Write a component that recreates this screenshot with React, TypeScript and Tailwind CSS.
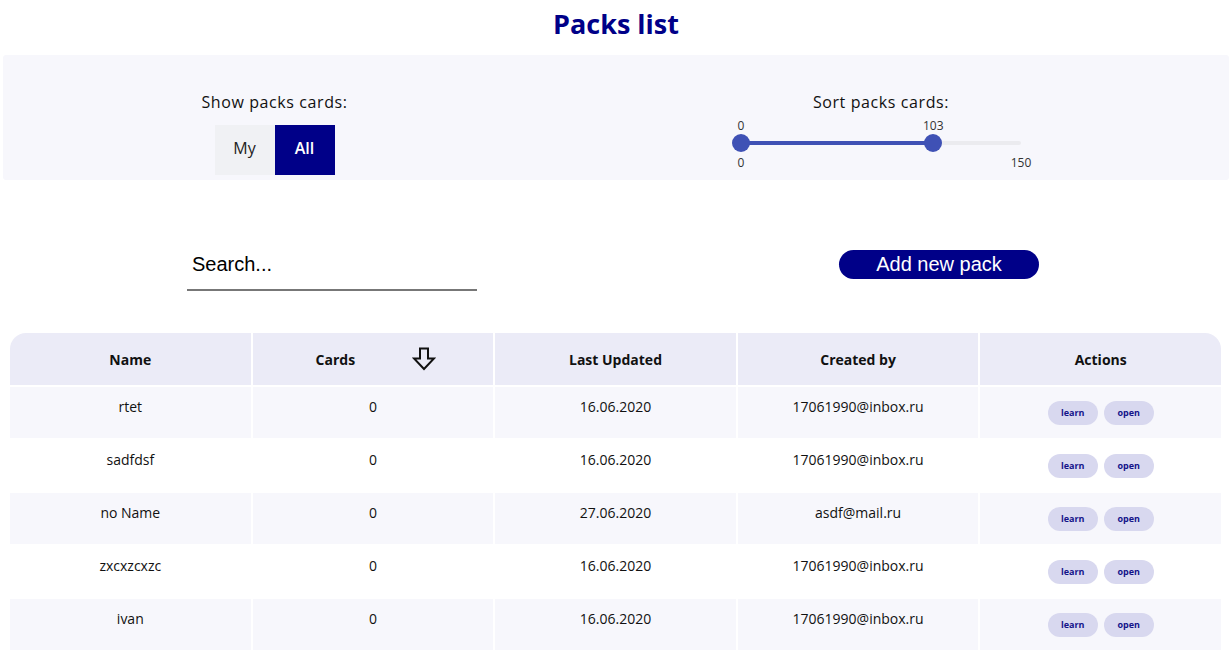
import React from "react";

const packs = [
  { name: "rtet", cards: 0, updated: "16.06.2020", user: "17061990@inbox.ru" },
  { name: "sadfdsf", cards: 0, updated: "16.06.2020", user: "17061990@inbox.ru" },
  { name: "no Name", cards: 0, updated: "27.06.2020", user: "asdf@mail.ru" },
  { name: "zxcxzcxzc", cards: 0, updated: "16.06.2020", user: "17061990@inbox.ru" },
  { name: "ivan", cards: 0, updated: "16.06.2020", user: "17061990@inbox.ru" },
];

function SortArrow() {
  return (
    <svg width="24" height="24" viewBox="0 0 24 24" fill="none" stroke="#111" strokeWidth="2" strokeLinejoin="miter">
      <path d="M8 1.5 H16 V11.5 H22 L12 22 L2 11.5 H8 Z" />
    </svg>
  );
}

function RangeSlider() {
  // values 0..103 of max 150, track is 280px
  const right = (103 / 150) * 280;
  return (
    <div className="relative w-[280px] h-[56px] mx-auto text-[12px] leading-[16px] text-[#333]">
      <span className="absolute top-[1px] left-0 -translate-x-1/2">0</span>
      <span className="absolute top-[1px] -translate-x-1/2" style={{ left: right }}>103</span>
      <div className="absolute top-[24px] left-0 w-full h-[4px] rounded-full bg-[#ebebef]" />
      <div className="absolute top-[24px] left-0 h-[4px] bg-[#3f51b5]" style={{ width: right }} />
      <div className="absolute top-[17px] left-0 -translate-x-1/2 w-[18px] h-[18px] rounded-full bg-[#3f51b5]" />
      <div className="absolute top-[17px] -translate-x-1/2 w-[18px] h-[18px] rounded-full bg-[#3f51b5]" style={{ left: right }} />
      <span className="absolute top-[38px] left-0 -translate-x-1/2">0</span>
      <span className="absolute top-[38px] left-[280px] -translate-x-1/2">150</span>
    </div>
  );
}

export default function App() {
  return (
    <div className="w-[1232px] h-[656px] overflow-hidden bg-white font-['Open_Sans',sans-serif] text-[#111]">
      <h1 className="text-center text-[27px] font-bold leading-[34px] pt-[7px] text-[#000088]">Packs list</h1>

      {/* filters */}
      <div className="mx-[3px] mt-[14px] h-[125px] rounded-[3px] bg-[#f7f7fc] flex pl-[197px] pt-[36px]">
        <div className="w-[149px] flex flex-col items-center">
          <span className="text-[16px] tracking-[0.6px] leading-[22px] whitespace-nowrap">Show packs cards:</span>
          <div className="flex mt-[12px]">
            <button className="w-[60px] h-[50px] pb-[4px] bg-[#f0f1f4] text-[16px] text-[#222]">My</button>
            <button className="w-[60px] h-[50px] pb-[4px] bg-[#000088] text-[16px] font-semibold text-white">All</button>
          </div>
        </div>
        <div className="w-[300px] ml-[382px] flex flex-col items-center">
          <span className="text-[16px] tracking-[0.6px] leading-[22px] whitespace-nowrap">Sort packs cards:</span>
          <div className="mt-[4px] w-full">
            <RangeSlider />
          </div>
        </div>
      </div>

      {/* search + add */}
      <div className="flex items-start pl-[187px] mt-[70px]">
        <div className="w-[290px] h-[41px] border-b-2 border-[#777] flex items-center">
          <input
            placeholder="Search..."
            className="w-full bg-transparent outline-none text-[20px] font-['Liberation_Sans',sans-serif] placeholder:text-black px-[5px] pb-[11px]"
          />
        </div>
        <button className="ml-[362px] w-[200px] h-[29px] pb-[2px] rounded-full bg-[#000088] text-white text-[20px] leading-[24px] font-['Liberation_Sans',sans-serif]">
          Add new pack
        </button>
      </div>

      {/* table */}
      <div className="mx-[10px] w-[1211px] mt-[42px] flex flex-col gap-[2px]">
        <div className="grid grid-cols-5 gap-[2px] h-[52px] text-[14px] font-bold">
          <div className="bg-[#ebebf7] rounded-tl-[16px] flex items-center justify-center">Name</div>
          <div className="bg-[#ebebf7] flex items-center justify-center gap-[57px] pl-[6px]">
            <span>Cards</span>
            <SortArrow />
          </div>
          <div className="bg-[#ebebf7] flex items-center justify-center">Last Updated</div>
          <div className="bg-[#ebebf7] flex items-center justify-center">Created by</div>
          <div className="bg-[#ebebf7] rounded-tr-[16px] flex items-center justify-center">Actions</div>
        </div>
        {packs.map((p, i) => (
          <div key={i} className="grid grid-cols-5 gap-[2px] h-[51px] text-[14px]">
            {[p.name, String(p.cards), p.updated, p.user].map((v, j) => (
              <div key={j} className={`${i % 2 === 0 ? "bg-[#f7f7fc]" : "bg-white"} text-center pt-[10px] leading-[20px]`}>
                {v}
              </div>
            ))}
            <div className={`${i % 2 === 0 ? "bg-[#f7f7fc]" : "bg-white"} flex justify-center gap-[6px] pt-[14px]`}>
              <button className="w-[50px] h-[24px] rounded-[12px] bg-[#d8d8ef] text-[9px] font-bold text-[#14148a]">learn</button>
              <button className="w-[50px] h-[24px] rounded-[12px] bg-[#d8d8ef] text-[9px] font-bold text-[#14148a]">open</button>
            </div>
          </div>
        ))}
      </div>
    </div>
  );
}
